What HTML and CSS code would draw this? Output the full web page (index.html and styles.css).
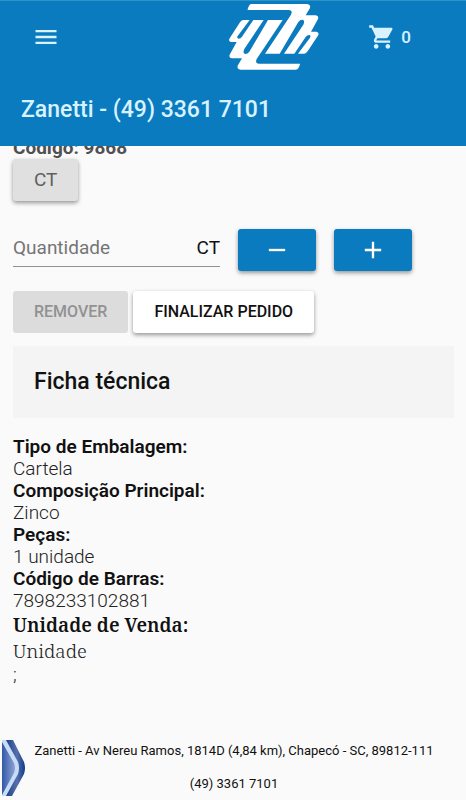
FILE: index.html
```html
<!DOCTYPE html>
<html lang="pt-BR">
<head>
<meta charset="utf-8">
<meta name="viewport" content="width=device-width, initial-scale=1">
<title>Zanetti</title>
<link rel="stylesheet" href="styles.css">
</head>
<body>
<header class="header">
  <div class="toolbar">
    <button class="icon-button" type="button" aria-label="Menu">
      <svg class="icon" viewBox="0 0 24 24"><path d="M3 18h18v-2H3v2zm0-5h18v-2H3v2zm0-7v2h18V6H3z"/></svg>
    </button>
    <svg class="logo" viewBox="84 9 276 204" role="img" aria-label="Zanetti">
      <defs>
        <path id="half" d="M130 60H149L113 108q-4 7 3 8q6 0 10-6L160 60H191L133 147q-6 13 3 15q7 0 12-7L204 60H248L170 177q-6 13 6 14H300q0 4-2 8l-3 6q-2 4-8 4H122q-12-2-9-12L126 175H96q-10-2-7-11L110 126H94q-9-2-6-10L120 67Q125 60 130 60Z"/>
      </defs>
      <use href="#half"/>
      <use href="#half" transform="rotate(180 221.5 110.5)"/>
    </svg>
    <a class="cart" href="#carrinho" aria-label="Carrinho">
      <svg class="icon" viewBox="0 0 24 24"><path d="M7 18c-1.100 0-1.990.9-1.990 2S5.900 22 7 22s2-.9 2-2-.9-2-2-2zM1 2v2h2l3.600 7.590-1.350 2.450c-.16.28-.25.61-.25.96 0 1.100.9 2 2 2h12v-2H7.420c-.14 0-.25-.11-.25-.25l.03-.12.9-1.630h7.450c.75 0 1.410-.41 1.750-1.030l3.580-6.490c.08-.14.12-.31.12-.48 0-.55-.45-1-1-1H5.210l-.94-2H1zm16 16c-1.100 0-1.990.9-1.990 2s.89 2 1.990 2 2-.9 2-2-.9-2-2-2z"/></svg>
      <span>0</span>
    </a>
  </div>
  <h1 class="title">Zanetti - (49) 3361 7101</h1>
</header>

<main class="content">
  <p class="code">Código: 9868</p>
  <button class="button unit" type="button">CT</button>

  <form class="quantity">
    <div class="field">
      <input class="input" type="text" placeholder="Quantidade" aria-label="Quantidade">
      <span>CT</span>
    </div>
    <button class="button step" type="button" aria-label="Diminuir">
      <svg class="icon" viewBox="0 0 24 24"><path d="M19 13H5v-2h14v2z"/></svg>
    </button>
    <button class="button step" type="button" aria-label="Aumentar">
      <svg class="icon" viewBox="0 0 24 24"><path d="M19 13h-6v6h-2v-6H5v-2h6V5h2v6h6v2z"/></svg>
    </button>
  </form>

  <div class="actions">
    <button class="button" type="button" disabled>REMOVER</button>
    <button class="button" type="button">FINALIZAR PEDIDO</button>
  </div>

  <h2 class="section-title">Ficha técnica</h2>
  <dl class="specs">
    <dt>Tipo de Embalagem:</dt>
    <dd>Cartela</dd>
    <dt>Composição Principal:</dt>
    <dd>Zinco</dd>
    <dt>Peças:</dt>
    <dd>1 unidade</dd>
    <dt>Código de Barras:</dt>
    <dd>7898233102881</dd>
    <dt class="serif">Unidade de Venda:</dt>
    <dd class="serif">Unidade</dd>
    <dd>;</dd>
  </dl>
</main>

<footer class="footer">
  <svg class="arrow" viewBox="0 0 24 56" aria-hidden="true">
    <defs>
      <linearGradient id="inner" x1="0" x2="1"><stop offset="0" stop-color="#3158a8"/><stop offset="1" stop-color="#8fa3d3"/></linearGradient>
      <linearGradient id="outer" x1="0" x2="1"><stop offset="0" stop-color="#123b87"/><stop offset=".6" stop-color="#5870ac"/><stop offset="1" stop-color="#0d3c88"/></linearGradient>
    </defs>
    <path fill="url(#outer)" d="M4 0h7l11 22q2 6 0 12L10 56H3z"/>
    <path fill="#c9dcf5" d="M0 0h4l12 22q2 6 0 12L4 56H0z"/>
    <path fill="url(#inner)" d="M0 2l12 21q2 5 0 10L0 55z"/>
  </svg>
  <address class="address">
    <span>Zanetti - Av Nereu Ramos, 1814D (4,84 km), Chapecó - SC, 89812-111</span>
    <span>(49) 3361 7101</span>
  </address>
</footer>
</body>
</html>
```
FILE: styles.css
```css
* {
  box-sizing: border-box;
}

body {
  margin: 0;
  min-height: 100vh;
  display: flex;
  flex-direction: column;
  background: #fafafa;
  color: #111;
  font: 19px/22px Roboto, sans-serif;
}

.header {
  position: fixed;
  inset: 0 0 auto;
  z-index: 1;
  border-top: 1px solid #2c94c6;
  background: #0b7bbf;
  color: #d8f3ff;
}

.toolbar {
  display: grid;
  grid-template-columns: 1fr auto 1fr;
  align-items: center;
  height: 72px;
  padding: 0 32px;
}

.icon {
  display: block;
  width: 28px;
  height: 28px;
  fill: currentColor;
}

.icon-button {
  justify-self: start;
  padding: 0;
  border: 0;
  background: none;
  color: inherit;
}

.logo {
  width: 92px;
  height: 68px;
  margin-left: 82px;
  fill: #fff;
}

.cart {
  display: flex;
  align-items: center;
  justify-self: end;
  gap: 5px;
  margin-right: 23px;
  color: inherit;
  font-size: 17px;
  font-weight: 500;
  text-decoration: none;
}

.title {
  margin: 0;
  padding: 20px 21px;
  font-size: 23px;
  line-height: 33px;
  font-weight: 500;
}

.content {
  flex: 1;
  padding: 137px 12px 0 13px;
}

.code {
  margin: 0;
  color: #505050;
  font-weight: 700;
}

.button {
  height: 42px;
  padding: 0 21px;
  border: 0;
  border-radius: 3px;
  background: #fff;
  box-shadow: 0 2px 4px rgba(0, 0, 0, 0.4);
  color: #111;
  font: 500 16px/22px Roboto, sans-serif;
}

.button:disabled {
  background: #dcdcdc;
  box-shadow: none;
  color: #929292;
}

.unit {
  display: block;
  background: #e0e0e0;
  color: #606060;
  font-size: 19px;
  font-weight: 400;
}

.quantity {
  display: flex;
  gap: 18px;
  margin: 28px 0 20px;
}

.field {
  display: flex;
  align-items: center;
  width: 207px;
  height: 38px;
  border-bottom: 1px solid #929292;
}

.input {
  flex: 1;
  min-width: 0;
  padding: 0;
  border: 0;
  outline: 0;
  background: none;
  font: inherit;
}

.input::placeholder {
  color: #757575;
}

.step {
  display: grid;
  place-items: center;
  width: 78px;
  padding: 0;
  background: #0b7bbf;
  color: #fff;
}

.actions {
  display: flex;
  gap: 5px;
}

.section-title {
  margin: 13px 0 18px;
  padding: 20px 21px;
  background: #f4f4f4;
  font-size: 23px;
  line-height: 32px;
  font-weight: 500;
}

.specs {
  margin: 0;
}

.specs dt {
  font-weight: 600;
}

.specs dd {
  margin: 0;
  color: #222;
  font-weight: 300;
}

.specs .serif {
  font-family: "Noto Serif", "DejaVu Serif", serif;
  line-height: 26px;
}

.footer {
  display: flex;
  gap: 8px;
  padding: 0 32px 4px 2px;
}

.arrow {
  width: 24px;
  height: 56px;
}

.address {
  flex: 1;
  display: grid;
  gap: 10px;
  text-align: center;
  font-size: 13px;
  font-style: normal;
}
```
